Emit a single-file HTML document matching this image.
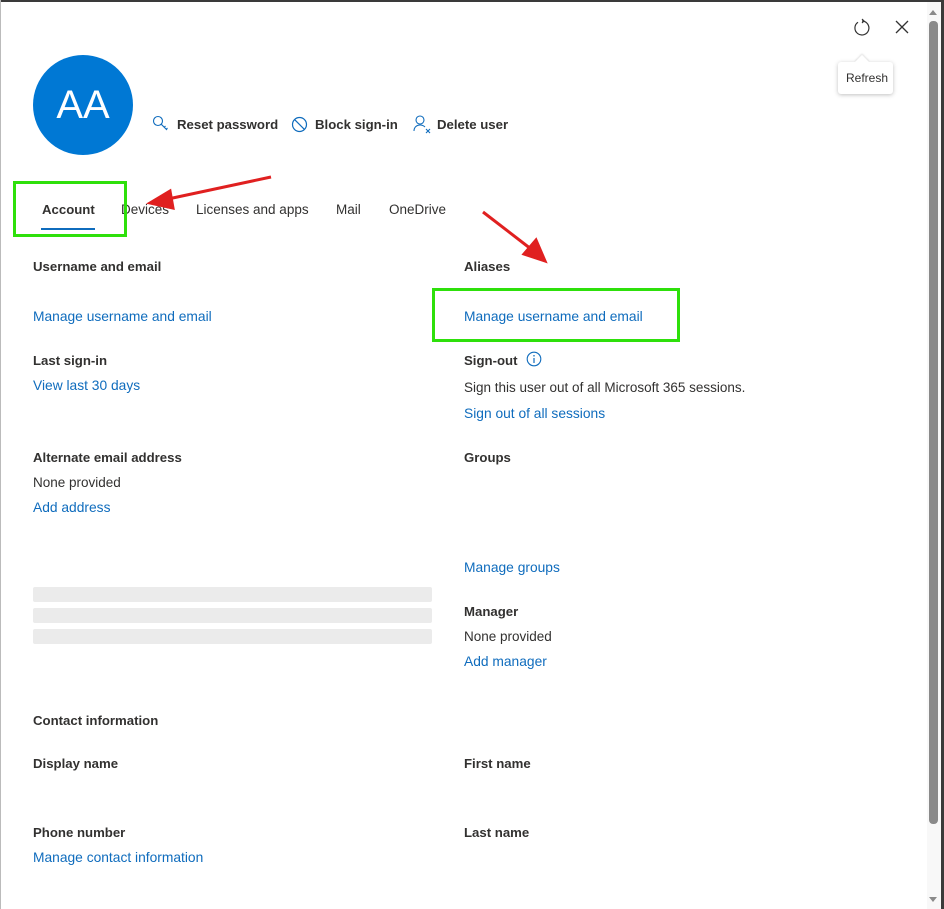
<!DOCTYPE html>
<html><head><meta charset="utf-8"><style>
*{margin:0;padding:0;box-sizing:border-box}
body{width:944px;height:909px;overflow:hidden;background:#fff;font-family:"Liberation Sans",sans-serif;font-size:13.5px;color:#323130;position:relative}
.a{position:absolute;white-space:nowrap}
.b{font-weight:bold;font-size:13.2px}
.l{color:#0f6cbd;font-size:13.8px}
.sk{position:absolute;left:33px;width:399px;height:15px;background:#ebebeb;border-radius:2px}
</style></head><body>
<div class="a" style="left:0;top:0;width:944px;height:2px;background:#3a3a3a"></div>
<div class="a" style="left:0;top:0;width:1px;height:909px;background:#bbb"></div>
<div class="a" style="left:941px;top:0;width:3px;height:909px;background:#3a3a3a"></div>
<div class="a" style="left:927px;top:2px;width:14px;height:907px;background:#f8f8f8"></div>
<div class="a" style="left:929px;top:21px;width:9px;height:803px;background:#8a8a8a;border-radius:4px"></div>
<div class="a" style="left:929px;top:10px;width:0;height:0;border-left:4.5px solid transparent;border-right:4.5px solid transparent;border-bottom:5px solid #8a8a8a"></div>
<div class="a" style="left:929px;top:897px;width:0;height:0;border-left:4.5px solid transparent;border-right:4.5px solid transparent;border-top:5px solid #8a8a8a"></div>

<svg class="a" style="left:852px;top:18px" width="20" height="20" viewBox="0 0 20 20"><path d="M6 4.2A7 7 0 1 0 10 3" fill="none" stroke="#333" stroke-width="1.2"/><path d="M10 1 L12 3 L10 5" fill="none" stroke="#333" stroke-width="1.2"/></svg>
<svg class="a" style="left:895px;top:20px" width="14" height="14" viewBox="0 0 14 14"><path d="M1 1L13 13M13 1L1 13" stroke="#333" stroke-width="1.3"/></svg>
<div class="a" style="left:838px;top:62px;width:55px;height:32px;background:#fff;box-shadow:0 1px 4px rgba(0,0,0,.25);border-radius:3px;font-size:12px;padding:9px 0 0 8px">Refresh</div>
<div class="a" style="left:857px;top:57px;width:10px;height:10px;background:#fff;transform:rotate(45deg);box-shadow:-1px -1px 2px rgba(0,0,0,.12)"></div>
<div class="a" style="left:850px;top:62px;width:24px;height:8px;background:#fff"></div>

<div class="a" style="left:33px;top:55px;width:100px;height:100px;border-radius:50%;background:#0078d4;color:#fff;font-size:40px;text-align:center;line-height:100px">AA</div>

<svg class="a" style="left:152px;top:115px" width="18" height="18" viewBox="0 0 18 18"><circle cx="6" cy="6" r="4.5" fill="none" stroke="#0f6cbd" stroke-width="1.1"/><path d="M9.3 9.3L15 15M12 12.5l1.5-1.5M14 14.5l1.5-1.5" stroke="#0f6cbd" stroke-width="1.1" fill="none"/></svg>
<div class="a b" style="left:177px;top:117px">Reset password</div>
<svg class="a" style="left:291px;top:116px" width="17" height="17" viewBox="0 0 17 17"><circle cx="8.5" cy="8.5" r="7" fill="none" stroke="#0f6cbd" stroke-width="1.2"/><path d="M3.6 3.6L13.4 13.4" stroke="#0f6cbd" stroke-width="1.2"/></svg>
<div class="a b" style="left:315px;top:117px">Block sign-in</div>
<svg class="a" style="left:412px;top:114px" width="20" height="20" viewBox="0 0 20 20"><circle cx="8" cy="6" r="4" fill="none" stroke="#0f6cbd" stroke-width="1.1"/><path d="M2 17c0-4 3-6 6-6s4 1 5 2" fill="none" stroke="#0f6cbd" stroke-width="1.1"/><path d="M14 15l4 4M18 15l-4 4" stroke="#0f6cbd" stroke-width="1.1"/></svg>
<div class="a b" style="left:437px;top:117px">Delete user</div>

<div class="a b" style="left:42px;top:202px">Account</div>
<div class="a" style="left:41px;top:228px;width:54px;height:2px;background:#0f6cbd"></div>
<div class="a" style="left:121px;top:202px">Devices</div>
<div class="a" style="left:196px;top:202px">Licenses and apps</div>
<div class="a" style="left:336px;top:202px">Mail</div>
<div class="a" style="left:389px;top:202px">OneDrive</div>
<div class="a" style="left:13px;top:181px;width:114px;height:56px;border:3px solid #2ee00b"></div>
<div class="a" style="left:432px;top:288px;width:248px;height:54px;border:3px solid #2ee00b"></div>
<svg class="a" style="left:0;top:0" width="944" height="909"><g stroke="#e02020" stroke-width="3" fill="#e02020"><line x1="271" y1="177" x2="168" y2="199"/><polygon points="150,203 170,191 173,208"/><line x1="483" y1="212" x2="531" y2="249"/><polygon points="545,261 524,254 536,240"/></g></svg>

<div class="a b" style="left:33px;top:259px">Username and email</div>
<div class="a l" style="left:33px;top:309px">Manage username and email</div>
<div class="a b" style="left:33px;top:353px">Last sign-in</div>
<div class="a l" style="left:33px;top:378px">View last 30 days</div>
<div class="a b" style="left:33px;top:450px">Alternate email address</div>
<div class="a" style="left:33px;top:475px">None provided</div>
<div class="a l" style="left:33px;top:500px">Add address</div>
<div class="sk" style="top:587px"></div>
<div class="sk" style="top:608px"></div>
<div class="sk" style="top:629px"></div>

<div class="a b" style="left:464px;top:259px">Aliases</div>
<div class="a l" style="left:464px;top:309px">Manage username and email</div>
<div class="a b" style="left:464px;top:353px">Sign-out</div>
<svg class="a" style="left:526px;top:351px" width="16" height="16" viewBox="0 0 16 16"><circle cx="8" cy="8" r="6.8" fill="none" stroke="#0f6cbd" stroke-width="1.1"/><path d="M8 7v5" stroke="#0f6cbd" stroke-width="1.2"/><circle cx="8" cy="4.8" r=".8" fill="#0f6cbd"/></svg>
<div class="a" style="left:464px;top:380px">Sign this user out of all Microsoft 365 sessions.</div>
<div class="a l" style="left:464px;top:406px">Sign out of all sessions</div>
<div class="a b" style="left:464px;top:450px">Groups</div>
<div class="a l" style="left:464px;top:560px">Manage groups</div>
<div class="a b" style="left:464px;top:604px">Manager</div>
<div class="a" style="left:464px;top:629px">None provided</div>
<div class="a l" style="left:464px;top:654px">Add manager</div>

<div class="a b" style="left:33px;top:713px">Contact information</div>
<div class="a b" style="left:33px;top:756px">Display name</div>
<div class="a b" style="left:464px;top:756px">First name</div>
<div class="a b" style="left:33px;top:825px">Phone number</div>
<div class="a b" style="left:464px;top:825px">Last name</div>
<div class="a l" style="left:33px;top:850px">Manage contact information</div>
</body></html>
